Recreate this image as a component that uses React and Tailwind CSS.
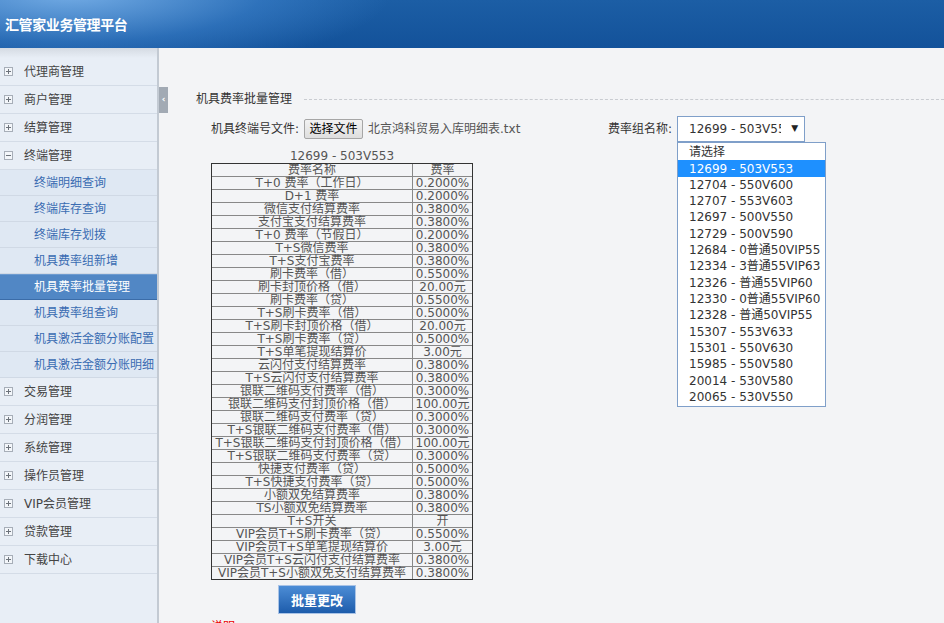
import React from 'react';

// sidebar menu: main groups, the open one carries its sub pages
const menu = [
  { name: '代理商管理' },
  { name: '商户管理' },
  { name: '结算管理' },
  {
    name: '终端管理',
    open: true,
    children: [
      '终端明细查询',
      '终端库存查询',
      '终端库存划拨',
      '机具费率组新增',
      '机具费率批量管理',
      '机具费率组查询',
      '机具激活金额分账配置',
      '机具激活金额分账明细',
    ],
  },
  { name: '交易管理' },
  { name: '分润管理' },
  { name: '系统管理' },
  { name: '操作员管理' },
  { name: 'VIP会员管理' },
  { name: '贷款管理' },
  { name: '下载中心' },
];

const activePage = '机具费率批量管理';

const rates = [
  ['T+0 费率（工作日）', '0.2000%'],
  ['D+1 费率', '0.2000%'],
  ['微信支付结算费率', '0.3800%'],
  ['支付宝支付结算费率', '0.3800%'],
  ['T+0 费率（节假日）', '0.2000%'],
  ['T+S微信费率', '0.3800%'],
  ['T+S支付宝费率', '0.3800%'],
  ['刷卡费率（借）', '0.5500%'],
  ['刷卡封顶价格（借）', '20.00元'],
  ['刷卡费率（贷）', '0.5500%'],
  ['T+S刷卡费率（借）', '0.5000%'],
  ['T+S刷卡封顶价格（借）', '20.00元'],
  ['T+S刷卡费率（贷）', '0.5000%'],
  ['T+S单笔提现结算价', '3.00元'],
  ['云闪付支付结算费率', '0.3800%'],
  ['T+S云闪付支付结算费率', '0.3800%'],
  ['银联二维码支付费率（借）', '0.3000%'],
  ['银联二维码支付封顶价格（借）', '100.00元'],
  ['银联二维码支付费率（贷）', '0.3000%'],
  ['T+S银联二维码支付费率（借）', '0.3000%'],
  ['T+S银联二维码支付封顶价格（借）', '100.00元'],
  ['T+S银联二维码支付费率（贷）', '0.3000%'],
  ['快捷支付费率（贷）', '0.5000%'],
  ['T+S快捷支付费率（贷）', '0.5000%'],
  ['小额双免结算费率', '0.3800%'],
  ['TS小额双免结算费率', '0.3800%'],
  ['T+S开关', '开'],
  ['VIP会员T+S刷卡费率（贷）', '0.5500%'],
  ['VIP会员T+S单笔提现结算价', '3.00元'],
  ['VIP会员T+S云闪付支付结算费率', '0.3800%'],
  ['VIP会员T+S小额双免支付结算费率', '0.3800%'],
];

const groups = [
  '请选择',
  '12699 - 503V553',
  '12704 - 550V600',
  '12707 - 553V603',
  '12697 - 500V550',
  '12729 - 500V590',
  '12684 - 0普通50VIP55',
  '12334 - 3普通55VIP63',
  '12326 - 普通55VIP60',
  '12330 - 0普通55VIP60',
  '12328 - 普通50VIP55',
  '15307 - 553V633',
  '15301 - 550V630',
  '15985 - 550V580',
  '20014 - 530V580',
  '20065 - 530V550',
];

const selected = '12699 - 503V553';

function PlusBox({ open }) {
  return (
    <svg width="9" height="9" viewBox="0 0 9 9" className="shrink-0">
      <rect x="0.5" y="0.5" width="8" height="8" fill="#f3f6fa" stroke="#a7aeb8" />
      <path d="M2 4.5h5" stroke="#6c727a" />
      {!open && <path d="M4.5 2v5" stroke="#6c727a" />}
    </svg>
  );
}

function Sidebar() {
  return (
    <div className="w-[159px] shrink-0 border-r-2 border-[#c3cad3] bg-[#e8eef6]">
      <div className="h-[10px] bg-gradient-to-b from-[#d5dbe3] to-[#e8eef6]" />
      {menu.map((item) => (
        <div key={item.name}>
          <div className="flex h-[28px] items-center border-b border-[#d4dce7] pl-[4px] text-[12px] text-[#444]">
            <PlusBox open={item.open} />
            <span className="ml-[11px]">{item.name}</span>
          </div>
          {item.children &&
            item.children.map((c) =>
              c === activePage ? (
                <div
                  key={c}
                  className="flex h-[26px] items-center border-t border-b border-t-[#6d9bd0] border-b-[#3b6ca8] bg-[#5187c5] pl-[34px] text-[12px] text-white"
                >
                  {c}
                </div>
              ) : (
                <div
                  key={c}
                  className="flex h-[26px] items-center border-b border-[#d0d9e5] bg-[#dfe8f3] pl-[34px] text-[12px] text-[#3a6cb2]"
                >
                  {c}
                </div>
              )
            )}
        </div>
      ))}
    </div>
  );
}

function GroupSelect() {
  return (
    <div className="relative">
      <div className="flex h-[26px] w-[128px] items-center border border-[#7f9fc9] bg-white pl-[11px] pr-[6px]">
        <span className="w-[92px] shrink-0 overflow-hidden whitespace-nowrap text-[12px] text-[#333]">{selected}</span>
        <span className="ml-auto text-[9px] text-[#222]">▼</span>
      </div>
      <div className="absolute left-0 top-[26px] z-10 w-[149px] border border-[#7f9fc9] bg-white pt-[1px] pb-[1px]">
        {groups.map((g) => (
          <div
            key={g}
            className={
              g === selected
                ? 'flex h-[16.33px] items-center whitespace-nowrap bg-[#1e90ff] pl-[11px] text-[12px] text-white'
                : 'flex h-[16.33px] items-center whitespace-nowrap pl-[11px] text-[12px] text-[#333]'
            }
          >
            {g}
          </div>
        ))}
      </div>
    </div>
  );
}

function RateTable() {
  return (
    <div>
      <div className="mt-[7px] w-[262px] text-center text-[12px] leading-[14px] text-[#555]">{selected}</div>
      <div className="w-[262px] border border-[#333] bg-[#f3f4f6] text-[12px] leading-[12px] text-[#555]">
        <div className="flex h-[13px] border-b border-[#888]">
          <div className="w-[201px] shrink-0 whitespace-nowrap border-r border-[#888] text-center">费率名称</div>
          <div className="flex-1 whitespace-nowrap text-center">费率</div>
        </div>
        {rates.map(([name, value], i) => (
          <div
            key={name}
            className={i === rates.length - 1 ? 'flex h-[12px]' : 'flex h-[13px] border-b border-[#888]'}
          >
            <div className="w-[201px] shrink-0 whitespace-nowrap border-r border-[#888] text-center">{name}</div>
            <div className="flex-1 whitespace-nowrap text-center">{value}</div>
          </div>
        ))}
      </div>
    </div>
  );
}

export default function App() {
  return (
    <div className="flex h-[623px] w-[944px] flex-col overflow-hidden bg-[#f3f4f6] [font-family:'DejaVu_Sans','Noto_Sans_CJK_SC',sans-serif]">
      {/* header */}
      <div className="flex h-[48px] shrink-0 items-center bg-[radial-gradient(ellipse_320px_80px_at_70px_-6px,rgba(130,185,240,0.85),rgba(70,140,215,0.45)_60%,transparent_100%),linear-gradient(to_bottom,#1c5ea5,#13529a)] pl-[5px]">
        <span className="text-[14px] font-bold tracking-[-0.4px] text-white [font-family:'Noto_Sans_CJK_SC',sans-serif]">
          汇管家业务管理平台
        </span>
      </div>

      <div className="flex flex-1">
        <Sidebar />

        <div className="relative flex-1 pl-[37px] pt-[43px]">
          {/* collapse tab */}
          <div className="absolute left-0 top-[39px] flex h-[26px] w-[9px] items-center justify-center bg-[#a2aab4] text-[9px] font-bold text-white">
            ‹
          </div>

          {/* legend */}
          <div className="flex h-[16px] items-center">
            <span className="text-[12px] text-[#333]">机具费率批量管理</span>
            <div className="ml-[12px] flex-1 border-t border-dashed border-[#c9ccd1]" />
          </div>

          <div className="ml-[15px]">
            <div className="mt-[9px] flex h-[26px] items-center text-[12px]">
              <div className="flex w-[397px] items-center">
                <span className="text-[#333]">机具终端号文件:</span>
                <span className="ml-[5px] flex h-[20px] w-[59px] items-center justify-center rounded-[2px] border border-[#a6a6a6] bg-gradient-to-b from-[#f2f2f2] to-[#dedede] text-black">
                  选择文件
                </span>
                <span className="ml-[5px] text-[#555]">北京鸿科贸易入库明细表.txt</span>
              </div>
              <span className="text-[#333]">费率组名称:</span>
              <div className="ml-[5px]">
                <GroupSelect />
              </div>
            </div>

            <RateTable />

            <button className="ml-[67px] mt-[5px] flex h-[29px] w-[78px] items-center justify-center border border-[#a9c3e6] bg-gradient-to-b from-[#4c8dd6] to-[#1d5cab] text-[13px] font-bold text-white [font-family:'Noto_Sans_CJK_SC',sans-serif]">
              批量更改
            </button>

            <div className="mt-[4px] text-[12px] text-[#e00]">说明:</div>
          </div>

          <div className="absolute bottom-[6px] right-[6px] text-[9px] leading-[10px] font-bold text-white/80 [font-family:'Liberation_Serif',serif]">
            www.mpos.cn
          </div>
        </div>
      </div>
    </div>
  );
}
